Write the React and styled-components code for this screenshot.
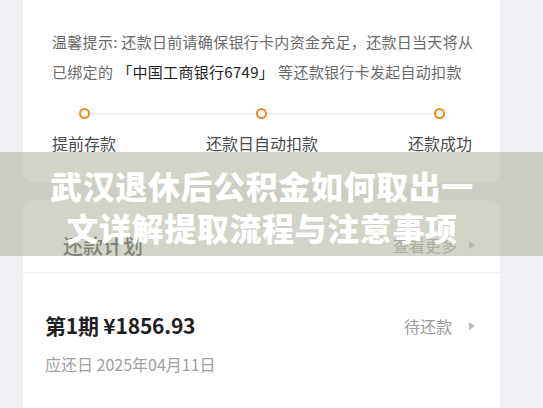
import React from 'react'
import styled, { createGlobalStyle } from 'styled-components'

const GlobalStyle = createGlobalStyle`
  html, body {
    margin: 0;
    padding: 0;
    background: #f0f1f5;
    font-family: "Noto Sans CJK SC", "Noto Sans", sans-serif;
    overflow: hidden;
  }
`

const steps = ['提前存款', '还款日自动扣款', '还款成功']

function App() {
  return (
    <>
      <GlobalStyle />
      <Page>
        <Card>
          <TipCard>
            <Hint>
              温馨提示: 还款日前请确保银行卡内资金充足，还款日当天将从
              <br />
              已绑定的
              <Bank>「中国工商银行6749」</Bank>
              等还款银行卡发起自动扣款
            </Hint>
            <Timeline>
              <Track />
              {steps.map((s) => (
                <Step key={s}>
                  <Dot />
                  <StepLabel>{s}</StepLabel>
                </Step>
              ))}
            </Timeline>
          </TipCard>
        </Card>

        <PlanCard>
          <PlanHeader>
            <PlanTitle>还款计划</PlanTitle>
            <More>
              查看更多
              <Arrow />
            </More>
          </PlanHeader>
          <Installment>
            <InstallmentMain>
              <Amount>第1期 ¥1856.93</Amount>
              <DueDate>应还日 2025年04月11日</DueDate>
            </InstallmentMain>
            <Status>
              待还款
              <Arrow />
            </Status>
          </Installment>
        </PlanCard>

        <Banner>
          <BannerText>
            武汉退休后公积金如何取出一
            <br />
            文详解提取流程与注意事项
          </BannerText>
        </Banner>
      </Page>
    </>
  )
}

export default App

const Page = styled.div`
  position: relative;
  width: 543px;
  height: 408px;
  overflow: hidden;
`

const Card = styled.div`
  margin: -12px 43px 0 23px;
  background: #fff;
  border-radius: 12px;
`

const TipCard = styled.div`
  padding: 39px 28px 29px 29px;
`

const Hint = styled.div`
  font-size: 15px;
  line-height: 30px;
  color: #6a6a6a;
  letter-spacing: 0.3px;
  white-space: nowrap;
`

const Bank = styled.span`
  color: #222;
  margin: 0 4px;
`

const Timeline = styled.div`
  position: relative;
  display: flex;
  justify-content: space-between;
  margin-top: 21px;
`

const Track = styled.div`
  position: absolute;
  left: 32px;
  right: 32px;
  top: 5px;
  height: 2px;
  background: #f2f2f2;
`

const Step = styled.div`
  position: relative;
  display: flex;
  flex-direction: column;
  align-items: center;
  gap: 13px;
`

const Dot = styled.div`
  width: 7px;
  height: 7px;
  border: 2.5px solid #e98a22;
  border-radius: 50%;
  background: #fff;
`

const StepLabel = styled.div`
  font-size: 16px;
  line-height: 22px;
  color: #4a4a4a;
`

const PlanCard = styled.div`
  margin: 17px 43px 0 23px;
  background: #fff;
  border-radius: 12px;
  height: 260px;
`

const PlanHeader = styled.div`
  display: flex;
  align-items: center;
  justify-content: space-between;
  height: 73px;
  padding: 18px 25px 0 40px;
  box-sizing: border-box;
  border-bottom: 1px solid #f0f0f0;
`

const PlanTitle = styled.div`
  font-size: 20px;
  font-weight: 500;
  color: #333;
`

const More = styled.div`
  display: flex;
  align-items: center;
  gap: 12px;
  font-size: 16px;
  color: #9a9a9a;
`

const Arrow = styled.span`
  width: 0;
  height: 0;
  border-top: 4.5px solid transparent;
  border-bottom: 4.5px solid transparent;
  border-left: 6px solid #bdbdbd;
`

const Installment = styled.div`
  display: flex;
  justify-content: space-between;
  align-items: flex-start;
  padding: 38px 25px 0 22px;
`

const InstallmentMain = styled.div`
  display: flex;
  flex-direction: column;
  gap: 14px;
`

const Amount = styled.div`
  font-size: 21px;
  line-height: 28px;
  font-weight: 700;
  letter-spacing: -0.2px;
  color: #1f1f1f;
`

const DueDate = styled.div`
  font-size: 16px;
  line-height: 22px;
  color: #a0a0a0;
`

const Status = styled(More)`
  margin-top: 3px;
  gap: 17px;
`

const Banner = styled.div`
  position: absolute;
  left: 0;
  right: 0;
  top: 152px;
  height: 104px;
  background: rgba(180, 183, 165, 0.6);
  display: flex;
  align-items: center;
  justify-content: center;
  padding-right: 19px;
  padding-top: 4px;
  box-sizing: border-box;
`

const BannerText = styled.div`
  font-size: 32px;
  line-height: 42px;
  font-weight: 900;
  letter-spacing: 0.6px;
  color: #fff;
  text-align: center;
`
